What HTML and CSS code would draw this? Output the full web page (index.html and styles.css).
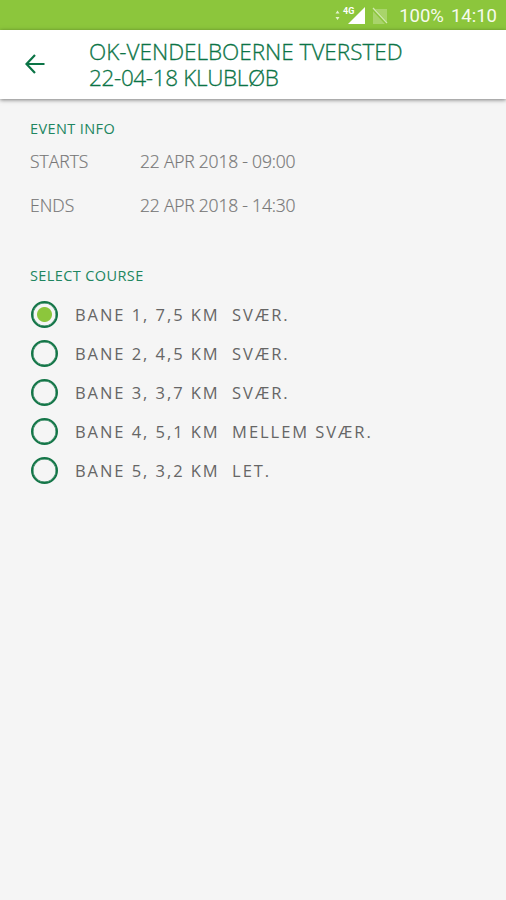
FILE: index.html
```html
<!DOCTYPE html>
<html lang="da">
<head>
    <meta charset="UTF-8">
    <meta name="viewport" content="width=device-width, initial-scale=1.0">
    <title>Select course</title>
    <link rel="stylesheet" href="styles.css">
</head>
<body>

    <!-- status bar -->
    <div class="status-bar">
        <svg class="status-icons" width="54" height="20" viewBox="0 0 54 20">
            <path d="M1.500 8.500l2-3 2 3zM1.500 12l2 3 2-3z" fill="#e4f3cd"/>
            <text x="9" y="9" class="network">4G</text>
            <path d="M31 2v17H14z" fill="#fff"/>
            <path d="M39 4h14v15H39z" fill="#a9d46b"/>
            <path d="M38 3l15 16" stroke="#8cc63c" stroke-width="3"/>
            <path d="M39 3l14 15" stroke="#d3eab2" stroke-width="1.200"/>
        </svg>
        <span class="battery">100%</span>
        <span class="clock">14:10</span>
    </div>

    <header class="header">
        <button class="back" aria-label="Back">
            <svg width="20" height="20" viewBox="0 0 20 20">
                <path d="M19.500 10H1.500M10 1L1.500 10l8.500 9" fill="none" stroke="#0b7446" stroke-width="2.200"/>
            </svg>
        </button>
        <h1 class="title">
            <span class="title-club">OK-VENDELBOERNE TVERSTED</span>
            <span class="title-event">22-04-18 KLUBLØB</span>
        </h1>
    </header>

    <main class="content">
        <h2 class="section-title">EVENT INFO</h2>
        <div class="info-row">
            <span class="label">STARTS</span>
            <span class="value">22 APR 2018 - 09:00</span>
        </div>
        <div class="info-row">
            <span class="label">ENDS</span>
            <span class="value">22 APR 2018 - 14:30</span>
        </div>

        <h2 class="section-title select-title">SELECT COURSE</h2>
        <div class="courses">
            <label class="course"><input type="radio" name="course" checked>BANE 1, 7,5 KM  SVÆR.</label>
            <label class="course"><input type="radio" name="course">BANE 2, 4,5 KM  SVÆR.</label>
            <label class="course"><input type="radio" name="course">BANE 3, 3,7 KM  SVÆR.</label>
            <label class="course"><input type="radio" name="course">BANE 4, 5,1 KM  MELLEM SVÆR.</label>
            <label class="course"><input type="radio" name="course">BANE 5, 3,2 KM  LET.</label>
        </div>
    </main>

</body>
</html>
```

FILE: styles.css
```css
body {
    margin: 0;
    min-height: 100vh;
    background-color: #f5f5f5;
    font-family: 'Open Sans', 'Noto Sans', sans-serif;
}
.status-bar {
    display: flex;
    align-items: center;
    justify-content: flex-end;
    box-sizing: border-box;
    height: 30px;
    padding-right: 9px;
    background-color: #8cc63c;
    color: #f6fbee;
    font-family: Roboto, sans-serif;
    font-size: 18.5px;
}
.status-icons {
    margin-right: 11px;
}
.network {
    font-size: 9px;
    font-weight: bold;
    fill: #fff;
}
.battery,
.clock {
    padding-top: 2px;
}
.battery {
    margin-right: 7px;
}
.header {
    display: flex;
    align-items: center;
    box-sizing: border-box;
    height: 69px;
    padding-left: 25px;
    background-color: #fff;
    box-shadow: 0 1px 4px rgba(0, 0, 0, 0.5);
}
.back {
    display: flex;
    width: 64px;
    padding: 0 0 1px;
    border: none;
    background: none;
    cursor: pointer;
}
.title {
    margin: 0;
    color: #0b7446;
    font-size: 22.5px;
    font-weight: 300;
    line-height: 26px;
    white-space: nowrap;
    -webkit-text-stroke: 0.3px #0b7446;
}
.title span {
    display: block;
}
.title-club {
    letter-spacing: 0;
}
.title-event {
    letter-spacing: -0.35px;
}
.content {
    padding: 19px 30px;
}
.section-title {
    margin: 0;
    color: #208560;
    font-size: 14.5px;
    font-weight: 400;
    line-height: 22px;
    letter-spacing: 0.4px;
}
.info-row {
    display: flex;
    height: 44px;
    color: #777;
    font-size: 17.5px;
    font-weight: 300;
    line-height: 43px;
    letter-spacing: -0.2px;
    -webkit-text-stroke: 0.2px #777;
}
.label {
    width: 110px;
    letter-spacing: 0;
}
.select-title {
    margin-top: 37px;
}
.courses {
    padding-top: 8px;
}
.course {
    display: flex;
    align-items: center;
    height: 39px;
    color: #666;
    font-size: 16.5px;
    letter-spacing: 1.95px;
    white-space: pre;
}
.course input {
    appearance: none;
    box-sizing: border-box;
    width: 27px;
    height: 27px;
    margin: 0 17px 0 1px;
    border: 2px solid #137547;
    border-radius: 50%;
    box-shadow: inset 0 0 0 0.5px #137547;
}
.course input:checked {
    background: radial-gradient(circle, #8cc63c 7px, transparent 8px);
}
```
